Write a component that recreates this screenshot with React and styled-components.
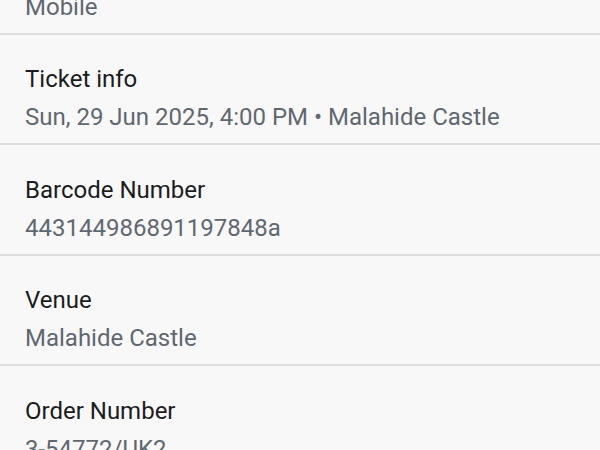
import React from "react";
import styled, { createGlobalStyle } from "styled-components";

const GlobalStyle = createGlobalStyle`
  html, body {
    margin: 0;
    padding: 0;
    background-color: #f8f8f8;
    overflow: hidden;
  }
  body {
    font-family: Roboto, "Noto Sans", sans-serif;
  }
`;

const Screen = styled.div`
  width: 600px;
  height: 450px;
  overflow: hidden;
  background-color: #f8f8f8;
`;

const List = styled.div`
  display: flex;
  flex-direction: column;
  margin-top: -76px;
`;

const Row = styled.div`
  display: flex;
  flex-direction: column;
  padding: 26.5px 25px 7px;
  border-bottom: 2px solid #dedede;
`;

const Label = styled.div`
  font-size: 24px;
  line-height: 37px;
  color: #1b1c1e;
`;

const Value = styled.div`
  font-size: 24px;
  line-height: 38px;
  color: #5f6870;
  white-space: nowrap;
`;

const details = [
  { label: "Delivery", value: "Mobile" },
  { label: "Ticket info", value: "Sun, 29 Jun 2025, 4:00 PM • Malahide Castle" },
  { label: "Barcode Number", value: "443144986891197848a" },
  { label: "Venue", value: "Malahide Castle" },
  { label: "Order Number", value: "3-54772/UK2" },
];

function App() {
  return (
    <>
      <GlobalStyle />
      <Screen>
        <List>
          {details.map((item) => (
            <Row key={item.label}>
              <Label>{item.label}</Label>
              <Value>{item.value}</Value>
            </Row>
          ))}
        </List>
      </Screen>
    </>
  );
}

export default App;
